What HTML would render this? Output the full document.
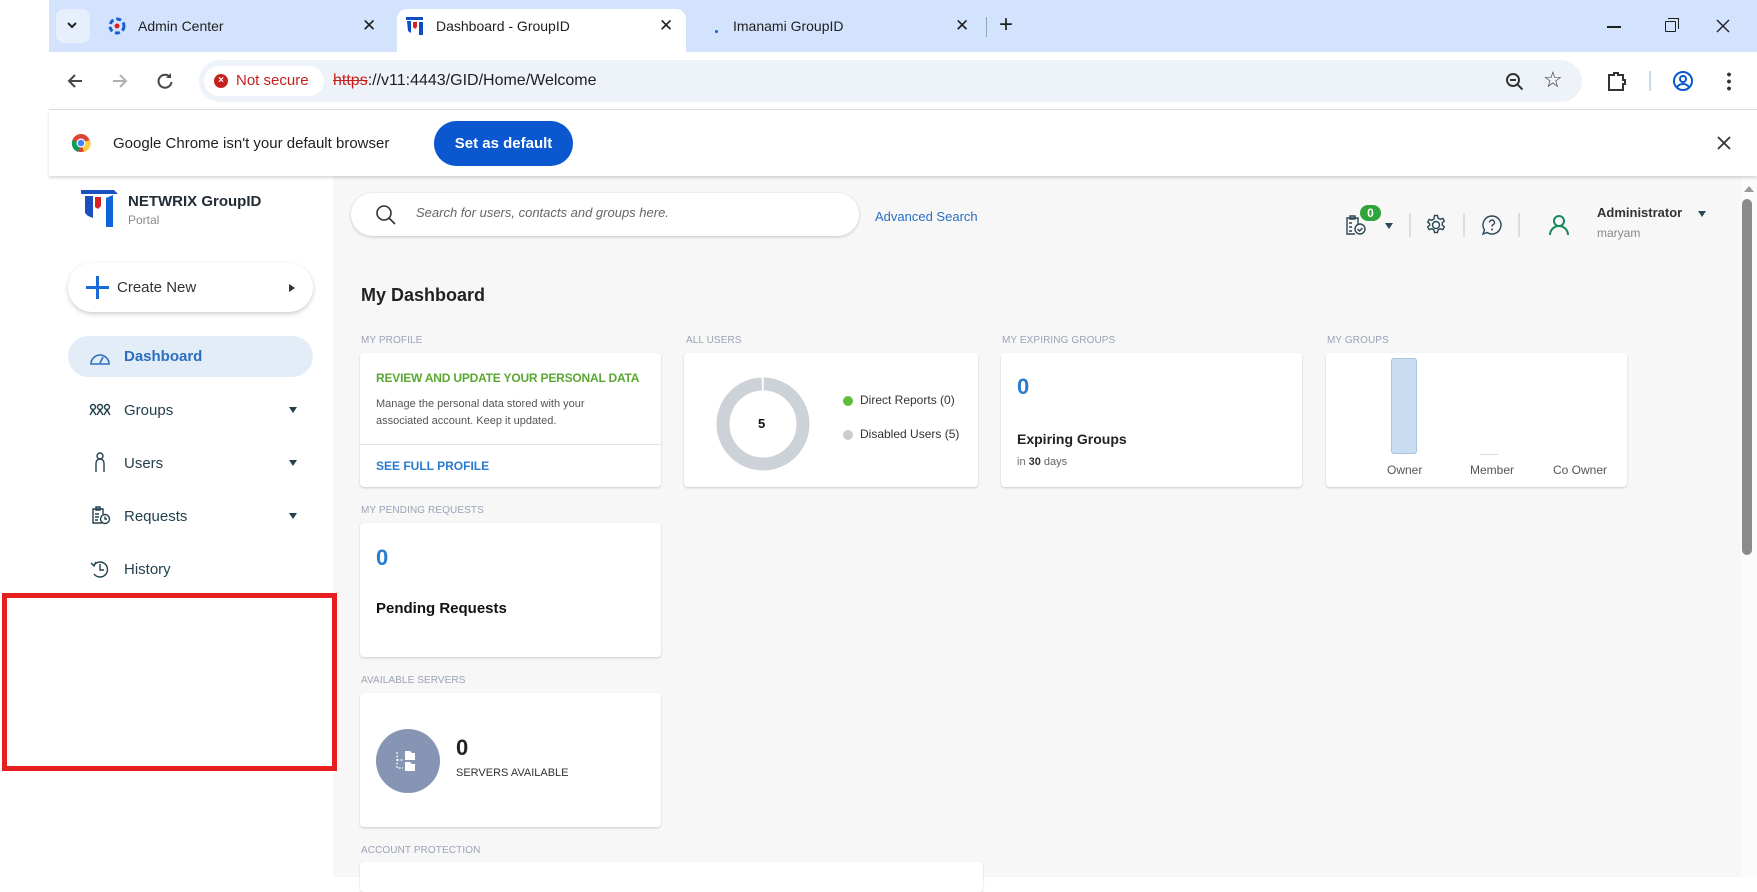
<!DOCTYPE html>
<html><head><meta charset="utf-8">
<style>
*{box-sizing:border-box;margin:0;padding:0}
body{width:1757px;height:877px;overflow:hidden;background:#fff;font-family:"Liberation Sans",sans-serif;position:relative}
.a{position:absolute}
.tabstrip{left:49px;top:0;width:1708px;height:52px;background:#d3e3fd}
.t{font-size:14px;color:#1f1f1f;white-space:nowrap}
.lbl{font-size:10px;color:#9aa3b5;letter-spacing:.1px}
.card{background:#fff;border-radius:4px;box-shadow:0 1px 2px rgba(0,0,0,.18);}
.nav{font-size:15px;color:#23404f;}
.caret{width:0;height:0;border-left:4px solid transparent;border-right:4px solid transparent;border-top:6px solid #23404f}
</style></head><body>
<div class="a tabstrip"></div>
<div class="a" style="left:56px;top:9px;width:34px;height:34px;border-radius:8px;background:#e8effc"></div>
<svg class="a" style="left:66px;top:21px" width="12" height="10"><path d="M2 2l4 4 4-4" stroke="#1f1f1f" stroke-width="2" fill="none"/></svg>
<svg class="a" style="left:107px;top:16px" width="20" height="20"><circle cx="10" cy="10" r="7" fill="none" stroke="#1a5fd0" stroke-width="3" stroke-dasharray="5 3"/><circle cx="10" cy="10" r="2.5" fill="#d22"/></svg>
<div class="a t" style="left:138px;top:18px">Admin Center</div>
<div class="a t" style="left:362px;top:16px;font-size:17px">✕</div>
<div class="a" style="left:397px;top:9px;width:289px;height:45px;background:#fff;border-radius:10px 10px 0 0"></div>
<svg class="a" style="left:405px;top:16px" width="20" height="20"><path d="M1 1h17v3H1z" fill="#0b4fc2"/><path d="M2 5h4v12l-3-2z" fill="#0b4fc2"/><path d="M8 6h4v5l-2 2-2-2z" fill="#d92323"/><path d="M14 6h4v13h-4z" fill="#0b4fc2"/></svg>
<div class="a t" style="left:436px;top:18px">Dashboard - GroupID</div>
<div class="a t" style="left:659px;top:16px;font-size:17px">✕</div>
<div class="a" style="left:715px;top:30px;width:3px;height:3px;background:#1a5fd0;border-radius:50%"></div>
<div class="a t" style="left:733px;top:18px">Imanami GroupID</div>
<div class="a t" style="left:955px;top:16px;font-size:17px">✕</div>
<div class="a" style="left:986px;top:17px;width:1px;height:20px;background:#8aa"></div>
<div class="a" style="left:999px;top:11px;font-size:24px;color:#1f1f1f">+</div>
<div class="a" style="left:1607px;top:26px;width:14px;height:1.5px;background:#1f1f1f"></div>
<div class="a" style="left:1665px;top:21px;width:11px;height:11px;border:1.5px solid #1f1f1f;border-radius:1px"></div>
<div class="a" style="left:1668px;top:18px;width:11px;height:11px;border-top:1.5px solid #1f1f1f;border-right:1.5px solid #1f1f1f"></div>
<svg class="a" style="left:1716px;top:19px" width="14" height="14"><path d="M1 1l12 12M13 1L1 13" stroke="#1f1f1f" stroke-width="1.4"/></svg>
<div class="a" style="left:49px;top:52px;width:1708px;height:58px;background:#fff;border-bottom:1px solid #dadce0"></div>
<svg class="a" style="left:66px;top:72px" width="18" height="18"><path d="M16 9H3M9 3L3 9l6 6" stroke="#474747" stroke-width="2" fill="none"/></svg>
<svg class="a" style="left:111px;top:72px" width="18" height="18"><path d="M2 9h13M9 3l6 6-6 6" stroke="#b0b0b0" stroke-width="2" fill="none"/></svg>
<svg class="a" style="left:156px;top:72px" width="18" height="18"><path d="M14 5A6.5 6.5 0 1 0 15.5 10" stroke="#474747" stroke-width="2" fill="none"/><path d="M15 1v5h-5" fill="#474747"/></svg>
<div class="a" style="left:199px;top:60px;width:1383px;height:42px;border-radius:21px;background:#eef2f9"></div>
<div class="a" style="left:204px;top:66px;width:120px;height:30px;border-radius:15px;background:#fff"></div>
<div class="a" style="left:214px;top:74px;width:14px;height:14px;border-radius:50%;background:#c5221f;color:#fff;font-size:10px;line-height:14px;text-align:center;font-weight:bold">×</div>
<div class="a" style="left:236px;top:72px;font-size:15px;color:#c5221f">Not secure</div>
<div class="a" style="left:333px;top:72px;font-size:16px;color:#1f1f1f"><span style="color:#c5221f;text-decoration:line-through">https</span>://v11:4443/GID/Home/Welcome</div>
<svg class="a" style="left:1505px;top:72px" width="20" height="20"><circle cx="8" cy="8" r="6" stroke="#333" stroke-width="2" fill="none"/><path d="M5 8h6M12.5 12.5l5 5" stroke="#333" stroke-width="2"/></svg>
<div class="a" style="left:1543px;top:67px;font-size:22px;color:#333">☆</div>
<svg class="a" style="left:1606px;top:70px" width="22" height="22"><path d="M3 5h5V3h4v2h5v5h2v4h-2v6H3z" stroke="#333" stroke-width="2" fill="none"/></svg>
<div class="a" style="left:1649px;top:71px;width:2px;height:20px;background:#c8d8f5"></div>
<svg class="a" style="left:1672px;top:70px" width="22" height="22"><circle cx="11" cy="11" r="9" stroke="#0b57d0" stroke-width="2" fill="none"/><circle cx="11" cy="9" r="3" stroke="#0b57d0" stroke-width="2" fill="none"/><path d="M5 17c3-4 9-4 12 0" stroke="#0b57d0" stroke-width="2" fill="none"/></svg>
<div class="a" style="left:1727px;top:71px;width:4px;height:20px;background:radial-gradient(circle,#333 1.8px,transparent 2px) 0 0/4px 7px"></div>
<div class="a" style="left:49px;top:110px;width:1708px;height:66px;background:#fff;box-shadow:0 2px 3px rgba(0,0,0,.15);z-index:2"></div>
<svg class="a" style="left:71px;top:133px;z-index:3" width="20" height="20"><circle cx="10" cy="10" r="9" fill="#db4437"/><path d="M10 10L1.5 7A9 9 0 0 0 7 19z" fill="#0f9d58"/><path d="M10 10l3 9A9 9 0 0 0 19 7z" fill="#ffcd40"/><circle cx="10" cy="10" r="4.5" fill="#fff"/><circle cx="10" cy="10" r="3.3" fill="#4285f4"/></svg>
<div class="a" style="left:113px;top:135px;font-size:15px;color:#1f1f1f;z-index:3">Google Chrome isn't your default browser</div>
<div class="a" style="left:434px;top:121px;width:139px;height:45px;border-radius:23px;background:#0b57d0;color:#fff;font-size:15px;font-weight:bold;text-align:center;line-height:45px;z-index:3">Set as default</div>
<svg class="a" style="left:1717px;top:136px;z-index:3" width="14" height="14"><path d="M1 1l12 12M13 1L1 13" stroke="#333" stroke-width="1.8"/></svg>
<div class="a" style="left:333px;top:176px;width:1408px;height:701px;background:#f7f7f8"></div>
<div class="a" style="left:1741px;top:176px;width:16px;height:701px;background:#fbfbfb"></div>
<div class="a" style="left:1744px;top:186px;width:0;height:0;border-left:5px solid transparent;border-right:5px solid transparent;border-bottom:6px solid #999"></div>
<div class="a" style="left:1742px;top:199px;width:10px;height:356px;border-radius:5px;background:#8a8a8a"></div>
<svg class="a" style="left:81px;top:190px" width="38" height="38"><path d="M0 0h33l4 4H0z" fill="#1c50c0"/><path d="M4 6h8v22l-5-2-3-3z" fill="#1c50c0"/><path d="M14 7h6v9l-3 3-3-2z" fill="#d92323"/><path d="M25 8l7-3v32h-7z" fill="#0d63d8"/></svg>
<div class="a" style="left:128px;top:193px;font-size:15px;font-weight:bold;color:#222c36">NETWRIX GroupID</div>
<div class="a" style="left:128px;top:213px;font-size:12px;color:#8a8a8a">Portal</div>
<div class="a" style="left:68px;top:263px;width:245px;height:49px;border-radius:25px;background:#fff;box-shadow:0 2px 5px rgba(0,0,0,.2)"></div>
<div class="a" style="left:86px;top:286px;width:23px;height:3px;background:#1a6ad6"></div>
<div class="a" style="left:96px;top:276px;width:3px;height:23px;background:#1a6ad6"></div>
<div class="a" style="left:117px;top:279px;font-size:15px;color:#333">Create New</div>
<div class="a" style="left:289px;top:284px;width:0;height:0;border-top:4px solid transparent;border-bottom:4px solid transparent;border-left:6px solid #333"></div>
<div class="a" style="left:68px;top:336px;width:245px;height:41px;border-radius:21px;background:#e3edf8"></div>
<svg class="a" style="left:89px;top:349px" width="22" height="16"><path d="M2 15A9 9 0 0 1 20 15z" stroke="#2a6fc0" stroke-width="1.6" fill="none"/><path d="M11 14l3-6" stroke="#2a6fc0" stroke-width="1.6"/></svg>
<div class="a nav" style="left:124px;top:348px;color:#2a6fc0;font-weight:bold">Dashboard</div>
<svg class="a" style="left:89px;top:403px" width="22" height="14"><g stroke="#23404f" stroke-width="1.4" fill="none"><circle cx="4" cy="4" r="2.5"/><circle cx="11" cy="4" r="2.5"/><circle cx="18" cy="4" r="2.5"/><path d="M1 12l3-5 3 5M8 12l3-5 3 5M15 12l3-5 3 5"/></g></svg>
<div class="a nav" style="left:124px;top:402px">Groups</div>
<div class="a caret" style="left:289px;top:407px"></div>
<svg class="a" style="left:93px;top:452px" width="14" height="22"><g stroke="#23404f" stroke-width="1.4" fill="none"><circle cx="7" cy="4" r="3"/><path d="M3 20V11a4 4 0 0 1 8 0v9"/></g></svg>
<div class="a nav" style="left:124px;top:455px">Users</div>
<div class="a caret" style="left:289px;top:460px"></div>
<svg class="a" style="left:91px;top:505px" width="20" height="20"><g stroke="#23404f" stroke-width="1.4" fill="none"><path d="M11 18H2V4h10v5"/><path d="M5 2h4v3H5z"/><circle cx="14" cy="14" r="4.5"/><path d="M14 11.5V14h2M4 9h4M4 12h4M4 15h3"/></g></svg>
<div class="a nav" style="left:124px;top:508px">Requests</div>
<div class="a caret" style="left:289px;top:513px"></div>
<svg class="a" style="left:90px;top:559px" width="20" height="20"><g stroke="#23404f" stroke-width="1.4" fill="none"><path d="M4 6A7.5 7.5 0 1 1 4 15"/><path d="M10 5v6h4"/><path d="M1 4l3 3 2-4"/></g></svg>
<div class="a nav" style="left:124px;top:561px">History</div>
<div class="a" style="left:2px;top:593px;width:335px;height:178px;border:5px solid #e61e1e"></div>
<div class="a" style="left:351px;top:193px;width:508px;height:43px;border-radius:22px;background:#fff;box-shadow:0 1px 3px rgba(0,0,0,.2)"></div>
<svg class="a" style="left:375px;top:204px" width="22" height="22"><circle cx="9" cy="9" r="7" stroke="#333" stroke-width="1.6" fill="none"/><path d="M14 14l6 6" stroke="#333" stroke-width="1.6"/></svg>
<div class="a" style="left:416px;top:205px;font-size:13px;font-style:italic;color:#666">Search for users, contacts and groups here.</div>
<div class="a" style="left:875px;top:209px;font-size:13px;color:#2a6fc0">Advanced Search</div>
<svg class="a" style="left:1345px;top:214px" width="22" height="22"><g stroke="#2b4856" stroke-width="1.4" fill="none"><path d="M10 20H2V4h11v6"/><path d="M5 2h5v3H5z"/><circle cx="15" cy="15" r="5"/><path d="M12.5 15l2 2 3-3M4 9h3M4 13h3M4 17h3"/></g></svg>
<div class="a" style="left:1360px;top:205px;width:21px;height:16px;border-radius:8px;background:#2fa43b;color:#fff;font-size:12px;font-weight:bold;text-align:center;line-height:16px">0</div>
<div class="a caret" style="left:1385px;top:223px;border-top-color:#2b4856"></div>
<div class="a" style="left:1409px;top:213px;width:2px;height:24px;background:#ddd"></div>
<svg class="a" style="left:1425px;top:214px" width="22" height="22"><g stroke="#2b4856" stroke-width="1.4" fill="none"><circle cx="11" cy="11" r="3.5"/><path d="M9.5 1.5h3l.6 2.6 2.2 1.2 2.5-.9 1.5 2.6-2 1.8v2.4l2 1.8-1.5 2.6-2.5-.9-2.2 1.2-.6 2.6h-3l-.6-2.6-2.2-1.2-2.5.9-1.5-2.6 2-1.8V9.8l-2-1.8 1.5-2.6 2.5.9 2.2-1.2z"/></g></svg>
<div class="a" style="left:1463px;top:213px;width:2px;height:24px;background:#ddd"></div>
<svg class="a" style="left:1481px;top:214px" width="22" height="22"><g stroke="#2b4856" stroke-width="1.4" fill="none"><path d="M11 2a9 9 0 1 1-5 16.5L2 20l1.5-4A9 9 0 0 1 11 2z"/><path d="M8.5 8.5a2.5 2.5 0 1 1 3.5 2.3c-.8.4-1 1-1 1.7"/></g><circle cx="11" cy="15.5" r="1" fill="#2b4856"/></svg>
<div class="a" style="left:1518px;top:213px;width:2px;height:24px;background:#ddd"></div>
<svg class="a" style="left:1548px;top:214px" width="22" height="22"><g stroke="#138a5c" stroke-width="2" fill="none"><circle cx="11" cy="7" r="5"/><path d="M2 21a9 9 0 0 1 18 0"/></g></svg>
<div class="a" style="left:1597px;top:205px;font-size:13px;font-weight:bold;color:#333">Administrator</div>
<div class="a caret" style="left:1698px;top:211px;border-top-color:#2b4856"></div>
<div class="a" style="left:1597px;top:226px;font-size:12px;color:#888">maryam</div>
<div class="a" style="left:361px;top:285px;font-size:18px;font-weight:bold;color:#222">My Dashboard</div>
<div class="a lbl" style="left:361px;top:335px">MY PROFILE</div>
<div class="a lbl" style="left:686px;top:335px">ALL USERS</div>
<div class="a lbl" style="left:1002px;top:335px">MY EXPIRING GROUPS</div>
<div class="a lbl" style="left:1327px;top:335px">MY GROUPS</div>
<div class="a lbl" style="left:361px;top:505px">MY PENDING REQUESTS</div>
<div class="a lbl" style="left:361px;top:675px">AVAILABLE SERVERS</div>
<div class="a lbl" style="left:361px;top:845px">ACCOUNT PROTECTION</div>
<div class="a card" style="left:360px;top:353px;width:301px;height:134px"></div>
<div class="a" style="left:376px;top:371px;font-size:12px;font-weight:bold;color:#5aa832;letter-spacing:-0.2px">REVIEW AND UPDATE YOUR PERSONAL DATA</div>
<div class="a" style="left:376px;top:396px;font-size:11px;color:#555;line-height:17px">Manage the personal data stored with your<br>associated account. Keep it updated.</div>
<div class="a" style="left:360px;top:444px;width:301px;height:1px;background:#e2e2e2"></div>
<div class="a" style="left:376px;top:459px;font-size:12px;font-weight:bold;color:#2a7bd0">SEE FULL PROFILE</div>
<div class="a card" style="left:684px;top:353px;width:294px;height:134px"></div>
<svg class="a" style="left:715px;top:376px" width="96" height="96"><circle cx="48" cy="48" r="40" stroke="#cdd2d9" stroke-width="13" fill="none" stroke-dasharray="249 2.3" transform="rotate(-89 48 48)"/></svg>
<div class="a" style="left:758px;top:416px;font-size:13px;font-weight:bold;color:#111">5</div>
<div class="a" style="left:843px;top:396px;width:10px;height:10px;border-radius:50%;background:#5fbd3c"></div>
<div class="a" style="left:860px;top:393px;font-size:12px;color:#333">Direct Reports (0)</div>
<div class="a" style="left:843px;top:430px;width:10px;height:10px;border-radius:50%;background:#ccc"></div>
<div class="a" style="left:860px;top:427px;font-size:12px;color:#333">Disabled Users (5)</div>
<div class="a card" style="left:1001px;top:353px;width:301px;height:134px"></div>
<div class="a" style="left:1017px;top:374px;font-size:22px;font-weight:bold;color:#2a7bd0">0</div>
<div class="a" style="left:1017px;top:431px;font-size:14px;font-weight:bold;color:#222">Expiring Groups</div>
<div class="a" style="left:1017px;top:456px;font-size:11px;color:#666">in <b style="color:#333">30</b> days</div>
<div class="a card" style="left:1326px;top:353px;width:301px;height:134px"></div>
<div class="a" style="left:1391px;top:358px;width:26px;height:96px;border-radius:3px;background:#c9dcf0;border:1px solid #a9c2de"></div>
<div class="a" style="left:1480px;top:454px;width:18px;height:1px;background:#cfe3cf"></div>
<div class="a" style="left:1387px;top:463px;font-size:12px;color:#555">Owner</div>
<div class="a" style="left:1470px;top:463px;font-size:12px;color:#555">Member</div>
<div class="a" style="left:1553px;top:463px;font-size:12px;color:#555">Co Owner</div>
<div class="a card" style="left:360px;top:523px;width:301px;height:134px"></div>
<div class="a" style="left:376px;top:545px;font-size:22px;font-weight:bold;color:#2a7bd0">0</div>
<div class="a" style="left:376px;top:600px;font-size:15px;font-weight:bold;color:#111">Pending Requests</div>
<div class="a card" style="left:360px;top:693px;width:301px;height:134px"></div>
<div class="a" style="left:376px;top:729px;width:64px;height:64px;border-radius:50%;background:#8795b5"></div>
<svg class="a" style="left:396px;top:749px" width="22" height="24"><path d="M1 3v16h6M1 11h6" stroke="#fff" stroke-width="1.2" stroke-dasharray="2 1.5" fill="none"/><path d="M9 2h5l2 2h3v7H9zM9 13h5l2 2h3v7H9z" fill="#fff"/></svg>
<div class="a" style="left:456px;top:735px;font-size:22px;font-weight:bold;color:#222">0</div>
<div class="a" style="left:456px;top:767px;font-size:11px;color:#333">SERVERS AVAILABLE</div>
<div class="a card" style="left:360px;top:862px;width:623px;height:30px"></div>
</body></html>
